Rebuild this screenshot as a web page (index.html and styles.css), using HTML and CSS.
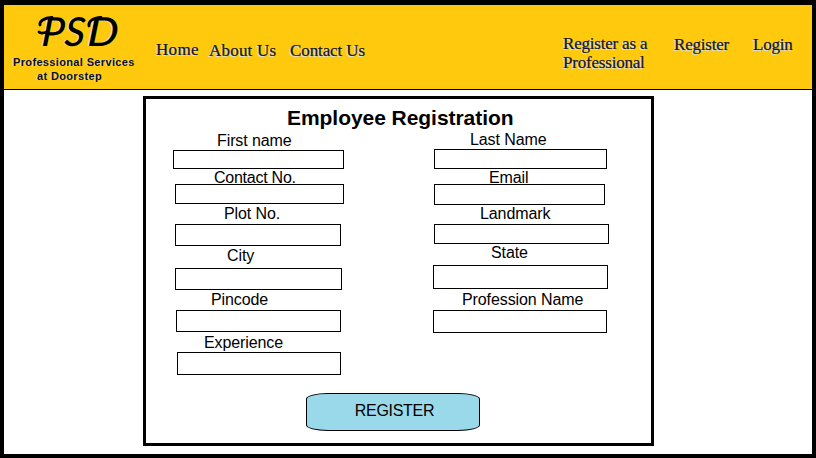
FILE: index.html
```html
<!DOCTYPE html>
<html lang="en">
<head>
<meta charset="utf-8">
<title>Employee Registration</title>
<link rel="stylesheet" href="styles.css">
</head>
<body>
<div class="page">
  <header class="header">
    <div class="brand">
      <div class="logo"><span class="letters"><span class="p">P</span><span class="s">S</span><span class="d">D</span></span>
        <svg class="swash" width="90" height="40" viewBox="0 0 90 40" aria-hidden="true">
          <path d="M4 10C3 6 8 3 16 2.5M3 17Q5 19 11 17M53 11C52 6 57 3 65 2.5"/>
        </svg>
      </div>
      <div class="tagline">Professional Services<br><span class="tagline-end">at Doorstep</span></div>
    </div>
    <nav class="nav">
      <a class="home">Home</a>
      <a class="about">About Us</a>
      <a class="contact-us">Contact Us</a>
    </nav>
    <nav class="account">
      <a class="pro"><span class="pro-top">Register as a</span><br>Professional</a>
      <a class="signup">Register</a>
      <a class="login">Login</a>
    </nav>
  </header>
  <main class="card">
    <h1>Employee Registration</h1>
    <form>
      <div class="columns">
        <div class="column">
          <label class="first" for="first">First name</label><input id="first" class="first">
          <label class="phone" for="phone">Contact No.</label><input id="phone" class="phone">
          <label class="plot" for="plot">Plot No.</label><input id="plot" class="plot">
          <label class="city" for="city">City</label><input id="city" class="city">
          <label class="pin" for="pin">Pincode</label><input id="pin" class="pin">
          <label class="exp" for="exp">Experience</label><input id="exp" class="exp">
        </div>
        <div class="column">
          <label class="last" for="last">Last Name</label><input id="last" class="last">
          <label class="email" for="email">Email</label><input id="email" class="email">
          <label class="landmark" for="landmark">Landmark</label><input id="landmark" class="landmark">
          <label class="state" for="state">State</label><input id="state" class="state">
          <label class="prof" for="prof">Profession Name</label><input id="prof" class="prof">
        </div>
      </div>
      <button type="button">REGISTER</button>
    </form>
  </main>
</div>
</body>
</html>
```
FILE: styles.css
```css
* { box-sizing: border-box; }
body { margin: 0; font-family: "Liberation Sans", Arial, sans-serif; color: #000; }
.page { width: 816px; height: 458px; border: 4px solid #000; border-top-width: 5px; background: #fff; overflow: hidden; }
.header { display: flex; height: 85px; background: #ffc90e; border-bottom: 1px solid #000; }
.brand { width: 152px; }
.logo { position: relative; height: 50px; padding-left: 38px; font: italic 500 40px/52px Lato, sans-serif; text-shadow: -1px 0 #d5e0df; }
.letters { display: flex; transform: skewX(-4deg); }
.letters span { flex: none; transform-origin: left center; }
.p { width: 23px; }
.s { width: 23px; }
.d { transform: scaleX(1.08); }
.swash { position: absolute; left: 32px; top: 10px; fill: none; stroke: #000; stroke-width: 2.8; stroke-linecap: round; }
.tagline { padding-left: 9px; font-size: 11px; font-weight: bold; line-height: 14px; letter-spacing: .35px; white-space: nowrap; color: #101020; text-shadow: -1px 0 #e8dfa0; }
.tagline-end { margin-left: 24px; }
.nav, .account { display: flex; align-items: flex-start; font: 17px/19px "Liberation Serif", serif; color: #15152c; text-shadow: -1px 1px #d5e0df; -webkit-text-stroke: .2px #15152c; white-space: nowrap; }
.nav { width: 407px; padding-top: 35px; }
.home { width: 53px; letter-spacing: .3px; }
.about { width: 81px; padding-top: 1px; letter-spacing: .2px; }
.contact-us { padding-top: 1px; letter-spacing: -.1px; }
.account { padding-top: 29px; letter-spacing: -.2px; }
.pro { width: 111px; }
.signup { width: 79px; padding-top: 1px; }
.login { padding-top: 1px; }
.card { width: 511px; height: 350px; margin: 6px 0 0 139px; border: 3px solid #000; }
h1 { margin: 5px 0 0; padding-left: 141px; font-size: 21px; line-height: 28px; height: 26px; letter-spacing: -.05px; }
.columns { display: grid; grid-template-columns: 260px 1fr; height: 249px; padding-left: 27px; }
.column { display: flex; flex-direction: column; align-items: flex-start; }
label { flex: none; height: 18px; padding-left: 1px; font-size: 16px; line-height: 20px; letter-spacing: -.1px; white-space: nowrap; }
input { flex: none; padding: 0 4px; border: 1px solid #000; border-radius: 0; background: transparent; outline: none; font: 14px "Liberation Sans", sans-serif; }

label.first { margin: 1px 0 0 43px; }
input.first { width: 171px; height: 19px; margin-top: 1px; }
label.phone { margin: -1px 0 0 41px; padding-left: 0; letter-spacing: -.25px; }
input.phone { width: 169px; height: 20px; margin: -2px 0 0 2px; }
label.plot { margin-left: 50px; }
input.plot { width: 166px; height: 22px; margin: 2px 0 0 2px; }
label.city { margin-left: 53px; }
input.city { width: 167px; height: 22px; margin: 4px 0 0 2px; }
label.pin { margin-left: 37px; }
input.pin { width: 165px; height: 22px; margin: 2px 0 0 3px; }
label.exp { margin: 1px 0 0 30px; }
input.exp { width: 164px; height: 23px; margin: 1px 0 0 4px; }

label.last { margin-left: 36px; }
input.last { width: 173px; height: 20px; margin: 1px 0 0 1px; }
label.email { margin: -1px 0 0 55px; }
input.email { width: 171px; height: 21px; margin: -2px 0 0 1px; }
label.landmark { margin: -1px 0 0 46px; }
input.landmark { width: 175px; height: 20px; margin: 2px 0 0 1px; }
label.state { margin: -1px 0 0 57px; }
input.state { width: 175px; height: 24px; margin-top: 4px; }
label.prof { margin: 1px 0 0 28px; }
input.prof { width: 174px; height: 23px; margin-top: 2px; }

button { display: block; width: 174px; height: 38px; margin: 14px 0 0 160px; padding: 0 0 2px 3px; border: 1px solid #000; border-radius: 22px / 6px; background: #99d9ea; color: #000; font: 16px/18px "Liberation Sans", sans-serif; letter-spacing: -.3px; }
```
